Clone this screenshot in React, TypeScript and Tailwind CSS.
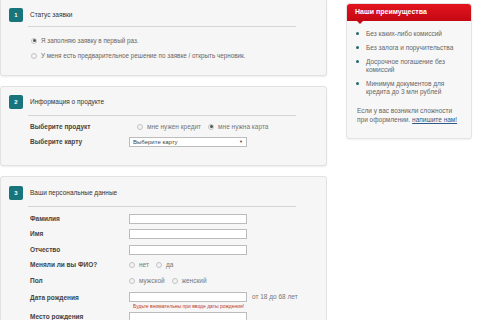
import React from 'react';

const font = { fontFamily: '"Liberation Sans", Arial, sans-serif' };

function Badge({ n }: { n: number }) {
  return (
    <span className="flex h-[14px] w-[14px] shrink-0 items-center justify-center rounded-[2px] bg-[#17757b] text-[6px] font-bold text-white">
      {n}
    </span>
  );
}

function PanelHead({ n, title }: { n: number; title: string }) {
  return (
    <div className="flex items-center gap-[7px] pl-[8px]">
      <Badge n={n} />
      <span className="text-[6.5px] text-[#333]">{title}</span>
    </div>
  );
}

function Divider() {
  return <div className="ml-[27px] mr-[30px] h-px bg-[#d5d5d5]" />;
}

function Radio({ checked = false }: { checked?: boolean }) {
  return (
    <span className="flex h-[6px] w-[6px] shrink-0 items-center justify-center rounded-full border border-[#c4c4c4] bg-[#f2f2f2]">
      {checked && <span className="h-[3px] w-[3px] rounded-full bg-[#555]" />}
    </span>
  );
}

function Row({ label, children, h = 'h-[15.5px]' }: { label: string; children?: React.ReactNode; h?: string }) {
  return (
    <div className={`flex items-center ${h}`}>
      <span className="w-[128px] shrink-0 pl-[29px] text-[6.5px] font-bold text-[#444]">{label}</span>
      <div className="flex items-center gap-[7px]">{children}</div>
    </div>
  );
}

function Input() {
  return <div className="h-[10px] w-[118px] border border-[#bcbcbc] bg-white" />;
}

function Opt({ checked, label }: { checked?: boolean; label: string }) {
  return (
    <span className="flex items-center gap-[4px] text-[6.5px] text-[#777]">
      <Radio checked={checked} />
      {label}
    </span>
  );
}

const perks = [
  ['Без каких-либо комиссий'],
  ['Без залога и поручительства'],
  ['Досрочное погашение без', 'комиссий'],
  ['Минимум документов для', 'кредита до 3 млн рублей'],
];

export default function App() {
  return (
    <div className="flex h-[320px] w-[480px] overflow-hidden bg-white" style={font}>
      <div className="flex w-[327px] shrink-0 flex-col">
        <div className="h-[2px] bg-[#d4d4d4]" />
        <div className="h-[76px] shrink-0 rounded-b-[3px] border border-t-0 border-[#e2e2e2] bg-[#f6f6f6] pt-[8px] shadow-[0_1px_2px_rgba(0,0,0,0.08)]">
          <PanelHead n={1} title="Статус заявки" />
          <div className="mt-[4px]">
            <Divider />
          </div>
          <div className="mt-[9px] flex flex-col gap-[6px] pl-[30px] text-[6.3px] text-[#666]">
            <span className="flex items-center gap-[4px]">
              <Radio checked />Я заполняю заявку в первый раз.
            </span>
            <span className="flex items-center gap-[4px]">
              <Radio />У меня есть предварительное решение по заявке / открыть черновик.
            </span>
          </div>
        </div>

        <div className="mt-[10px] h-[80px] shrink-0 rounded-[3px] border border-[#e2e2e2] bg-[#f6f6f6] pt-[8px] shadow-[0_1px_2px_rgba(0,0,0,0.08)]">
          <PanelHead n={2} title="Информация о продукте" />
          <div className="mt-[6px]">
            <Divider />
          </div>
          <div className="mt-[3px]">
            <Row label="Выберите продукт">
              <span className="pl-[1px]" />
              <Opt label="мне нужен кредит" />
              <Opt checked label="мне нужна карта" />
            </Row>
            <Row label="Выберите карту">
              <div className="flex h-[10px] w-[118px] items-center justify-between border border-[#bcbcbc] bg-white px-[3px] text-[6px] text-[#444]">
                <span>Выберите карту</span>
                <span className="text-[4px]">▼</span>
              </div>
            </Row>
          </div>
        </div>

        <div className="mt-[10px] flex-1 rounded-t-[3px] border border-b-0 border-[#e2e2e2] bg-[#f6f6f6] pt-[9px]">
          <PanelHead n={3} title="Ваши персональные данные" />
          <div className="mt-[6px]">
            <Divider />
          </div>
          <div className="mt-[4px]">
            <Row label="Фамилия"><Input /></Row>
            <Row label="Имя"><Input /></Row>
            <Row label="Отчество"><Input /></Row>
            <Row label="Меняли ли вы ФИО?">
              <Opt label="нет" />
              <Opt label="да" />
            </Row>
            <Row label="Пол">
              <Opt label="мужской" />
              <Opt label="женский" />
            </Row>
            <div className="flex items-start pt-[3px]">
              <span className="w-[128px] shrink-0 pl-[29px] pt-[1px] text-[6.5px] font-bold text-[#444]">Дата рождения</span>
              <div className="flex flex-col">
                <div className="flex items-center gap-[5px]">
                  <Input />
                  <span className="text-[6.5px] text-[#777]">от 18 до 68 лет</span>
                </div>
                <span className="pl-[4px] pt-[1px] text-[5px] text-[#c0392b]">Будьте внимательны при вводе даты рождения!</span>
              </div>
            </div>
            <Row label="Место рождения" h="h-[14px]"><Input /></Row>
          </div>
        </div>
      </div>

      <div className="ml-[19px] mt-[3px] h-[136px] w-[126px] shrink-0 rounded-[3px] border border-[#e4e4e4] bg-[#f7f7f7] shadow-[0_1px_2px_rgba(0,0,0,0.06)]">
        <div className="relative flex h-[17px] items-center rounded-t-[3px] bg-gradient-to-b from-[#e3141f] to-[#c40812] pl-[8px] text-[7px] font-bold text-white">
          Наши преимущества
          <span className="absolute left-[10px] top-[17px] h-0 w-0 border-x-[3px] border-t-[3px] border-x-transparent border-t-[#c40812]" />
        </div>
        <div className="mt-[9px] flex flex-col gap-[6px] pl-[9px] pr-[6px]">
          {perks.map((p, i) => (
            <div key={i} className="flex gap-[7px]">
              <span className="mt-[2px] h-[3px] w-[3px] shrink-0 rounded-full bg-[#1f6b69]" />
              <div className="flex flex-col text-[6.5px] leading-[8px] text-[#666]">
                {p.map((l) => (
                  <span key={l}>{l}</span>
                ))}
              </div>
            </div>
          ))}
        </div>
        <div className="mt-[10px] pl-[10px] text-[6.5px] leading-[9px] text-[#666]">
          Если у вас возникли сложности
          <br />
          при оформлении. <span className="text-[#2d5a86] underline">напишите нам!</span>
        </div>
      </div>
    </div>
  );
}
